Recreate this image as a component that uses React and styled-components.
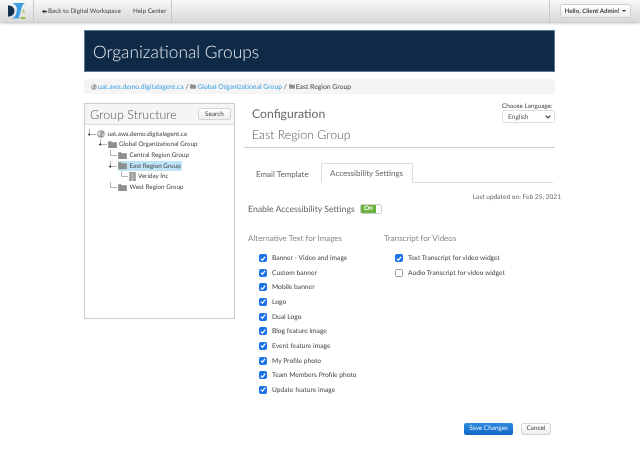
import React from "react";
import styled, { createGlobalStyle } from "styled-components";

const GlobalStyle = createGlobalStyle`
  html, body {
    margin: 0;
    padding: 0;
    background: #fff;
    font-family: Lato, "Open Sans", sans-serif;
    color: #333;
    text-rendering: geometricPrecision;
  }
`;

const imageItems = [
  "Banner - Video and image",
  "Custom banner",
  "Mobile banner",
  "Logo",
  "Dual Logo",
  "Blog feature image",
  "Event feature image",
  "My Profile photo",
  "Team Members Profile photo",
  "Update feature image",
];

const Folder = ({ size = 9 }) => (
  <svg width={size} height={size * 0.8} viewBox="0 0 11 9" style={{ flex: "none" }}>
    <path d="M0 1.2 Q0 .4 .8 .4 H3.6 L4.6 1.5 H10.2 Q11 1.5 11 2.2 V8.2 Q11 9 10.2 9 H.8 Q0 9 0 8.2Z" fill="#8f8f8f" />
  </svg>
);

const Globe = ({ size = 8, color = "#999" }) => (
  <svg width={size} height={size} viewBox="0 0 10 10" style={{ flex: "none" }}>
    <circle cx="5" cy="5" r="4.6" fill={color} />
    <path d="M2 2.2 L4.6 1.6 L5.4 3.2 L3.6 4.6 L4.4 6.4 L3.4 8 L1.4 5.6Z M6.4 5 L8.6 4.6 L8 7.4 L6.6 8Z" fill="#dedede" />
  </svg>
);

const Building = () => (
  <svg width="7" height="9" viewBox="0 0 8 11" style={{ flex: "none" }}>
    <rect width="8" height="11" fill="#969696" />
    <rect x="1.5" y="1.5" width="5" height="7" fill="#b0b0b0" />
    <rect x="3" y="9" width="2" height="2" fill="#e0e0e0" />
  </svg>
);

const Connector = ({ open }) => (
  <ConnectorSvg width="11" height="11" viewBox="0 0 11 11">
    <path d="M3.5 0 V5.5 H10" stroke="#b4b4b4" strokeWidth="1" fill="none" />
    {open && <path d="M1.5 5.5 L4 4 V7Z" fill="#444" />}
  </ConnectorSvg>
);

const Logo = () => (
  <svg width="20" height="18" viewBox="0 0 20 18">
    <path d="M1 3.5 H2.6 Q7.4 4.8 7.4 9 Q7.4 13.2 2.6 14.5 H1Z" fill="#14304f" />
    <path d="M5.5 1 H18 L15.5 3 L11.5 16.6 H3.5 Q8.4 16 9.4 11 L10 7.2 Q9.6 3 5.5 1Z" fill="#3d9fe0" />
    <path d="M16.5 7 L18.6 10.5 H14.8Z" fill="#a9cf7a" />
    <rect x="13.6" y="15" width="5" height="2" fill="#8dc63f" />
  </svg>
);

const Check = () => (
  <svg width="7" height="7" viewBox="0 0 7 7">
    <path d="M1 3.7 L2.8 5.6 L6 1.2" stroke="#fff" strokeWidth="1.5" fill="none" />
  </svg>
);

const BackArrow = styled.svg`
  flex: none;
  margin-right: 1px;
`;

const App = () => (
  <>
    <GlobalStyle />
    <TopBar>
      <LogoCell><Logo /></LogoCell>
      <BarLink $width="88px">
        <BackArrow width="5" height="5" viewBox="0 0 6 5">
          <path d="M0 2.5 L2.6 0 V1.6 H6 V3.4 H2.6 V5Z" fill="#333" />
        </BackArrow>
        Back to Digital Workspace
      </BarLink>
      <BarLink $width="50px" $last>Help Center</BarLink>
      <UserCell>
        <UserButton>
          Hello, Client Admin! <Caret />
        </UserButton>
      </UserCell>
    </TopBar>
    <Page>
      <Banner>Organizational Groups</Banner>
      <Breadcrumb>
        <Globe size={6} />
        <a>uat.aws.demo.digitalagent.ca</a>
        <Sep>/</Sep>
        <Folder size={6} />
        <a>Global Organizational Group</a>
        <Sep>/</Sep>
        <Folder size={6} />
        <span>East Region Group</span>
      </Breadcrumb>
      <Columns>
        <TreePanel>
          <TreeHeader>
            <TreeTitle>Group Structure</TreeTitle>
            <SearchButton>Search</SearchButton>
          </TreeHeader>
          <Tree>
            <TreeRow $depth={0}>
              <Connector open />
              <Globe />
              <TreeLabel>uat.aws.demo.digitalagent.ca</TreeLabel>
            </TreeRow>
            <TreeRow $depth={1}>
              <Connector open />
              <Folder />
              <TreeLabel>Global Organizational Group</TreeLabel>
            </TreeRow>
            <TreeRow $depth={2}>
              <Connector />
              <Folder />
              <TreeLabel>Central Region Group</TreeLabel>
            </TreeRow>
            <TreeRow $depth={2}>
              <Connector open />
              <Selected>
                <Folder />
                <TreeLabel>East Region Group</TreeLabel>
              </Selected>
            </TreeRow>
            <TreeRow $depth={3}>
              <Connector />
              <Building />
              <TreeLabel>Veriday Inc</TreeLabel>
            </TreeRow>
            <TreeRow $depth={2}>
              <Connector />
              <Folder />
              <TreeLabel>West Region Group</TreeLabel>
            </TreeRow>
          </Tree>
        </TreePanel>
        <Config>
          <ConfigHead>
            <ConfigHeading>
              <ConfigTitle>Configuration</ConfigTitle>
              <ConfigGroup>East Region Group</ConfigGroup>
            </ConfigHeading>
            <Language>
              <LanguageLabel>Choose Language:</LanguageLabel>
              <LanguageSelect>
                English
                <svg width="6" height="4" viewBox="0 0 6 4">
                  <path d="M.6 .6 L3 3 L5.4 .6" stroke="#444" strokeWidth="1.2" fill="none" />
                </svg>
              </LanguageSelect>
            </Language>
          </ConfigHead>
          <Tabs>
            <Tab>Email Template</Tab>
            <Tab $active>Accessibility Settings</Tab>
          </Tabs>
          <Updated>Last updated on: Feb 25, 2021</Updated>
          <EnableRow>
            <EnableLabel>Enable Accessibility Settings</EnableLabel>
            <Toggle>
              <ToggleOn>On</ToggleOn>
              <ToggleKnob />
            </Toggle>
          </EnableRow>
          <Options>
            <OptionColumn $width="136px">
              <OptionTitle>Alternative Text for Images</OptionTitle>
              <OptionList>
                {imageItems.map((label) => (
                  <Option key={label}>
                    <Box $checked><Check /></Box>
                    {label}
                  </Option>
                ))}
              </OptionList>
            </OptionColumn>
            <OptionColumn>
              <OptionTitle>Transcript for Videos</OptionTitle>
              <OptionList>
                <Option>
                  <Box $checked><Check /></Box>
                  Text Transcript for video widget
                </Option>
                <Option>
                  <Box />
                  Audio Transcript for video widget
                </Option>
              </OptionList>
            </OptionColumn>
          </Options>
          <Actions>
            <SaveButton>Save Changes</SaveButton>
            <CancelButton>Cancel</CancelButton>
          </Actions>
        </Config>
      </Columns>
    </Page>
  </>
);

const TopBar = styled.header`
  display: flex;
  align-items: stretch;
  height: 22px;
  background: linear-gradient(#f7f7f7, #d9d9d9);
  box-shadow: 0 1px 3px rgba(0, 0, 0, 0.3);
  will-change: transform;
`;

const LogoCell = styled.div`
  width: 34px;
  box-sizing: border-box;
  display: flex;
  align-items: center;
  padding-left: 7px;
  border-right: 1px solid #c8c8c8;
`;

const BarLink = styled.div`
  width: ${(p) => p.$width};
  box-sizing: border-box;
  display: flex;
  align-items: center;
  padding-left: ${(p) => (p.$last ? "11px" : "8px")};
  font-size: 6.3px;
  color: #444;
  white-space: nowrap;
  border-right: 1px solid ${(p) => (p.$last ? "#c8c8c8" : "transparent")};
`;

const UserCell = styled.div`
  margin-left: auto;
  width: 91px;
  box-sizing: border-box;
  padding: 4px 9px 0 10px;
  border-left: 1px solid #c8c8c8;
`;

const UserButton = styled.div`
  height: 12px;
  display: flex;
  align-items: center;
  justify-content: center;
  gap: 3px;
  background: linear-gradient(#fff, #ececec);
  border: 1px solid #d0d0d0;
  border-radius: 2px;
  font-size: 6.2px;
  font-weight: 700;
  color: #444;
  white-space: nowrap;
`;

const Caret = styled.span`
  width: 0;
  height: 0;
  border: 2px solid transparent;
  border-top-color: #333;
  border-bottom: 0;
`;

const Page = styled.main`
  width: 471px;
  margin: 8px 0 0 84px;
  will-change: transform;
`;

const Banner = styled.h1`
  margin: 0;
  height: 42px;
  box-sizing: border-box;
  padding-left: 8px;
  display: flex;
  align-items: center;
  background: #0e2a47;
  color: #e6ebf0;
  font-size: 17.3px;
  font-weight: 300;
  border: 1px solid #5c7893;
`;

const Breadcrumb = styled.nav`
  margin-top: 7px;
  height: 15px;
  display: flex;
  align-items: center;
  gap: 1px;
  padding-left: 7px;
  background: #f5f5f5;
  border-radius: 2px;
  font-size: 6.8px;
  color: #444;
  white-space: nowrap;
  a {
    color: #3a9fe2;
  }
`;

const Sep = styled.span`
  margin: 0 0.8px;
`;

const Columns = styled.div`
  display: flex;
  gap: 9px;
  margin-top: 9px;
`;

const TreePanel = styled.aside`
  width: 151px;
  height: 216px;
  box-sizing: border-box;
  border: 1px solid #ccc;
  flex: none;
`;

const TreeHeader = styled.div`
  height: 20px;
  display: flex;
  align-items: center;
  justify-content: space-between;
  padding: 0 3px 0 5px;
  background: #f5f5f5;
  border-bottom: 1px solid #ddd;
`;

const TreeTitle = styled.div`
  font-size: 12.5px;
  font-weight: 300;
  color: #555;
`;

const Tree = styled.div`
  padding-top: 4px;
`;

const TreeRow = styled.div`
  display: flex;
  align-items: center;
  height: 10.6px;
  padding-left: ${(p) => p.$depth * 10.5 + 1}px;
`;

const ConnectorSvg = styled.svg`
  flex: none;
`;

const TreeLabel = styled.span`
  margin-left: 2.5px;
  font-size: 6.3px;
  color: #444;
  white-space: nowrap;
`;

const Selected = styled.span`
  display: flex;
  align-items: center;
  height: 10px;
  padding-right: 1px;
  background: #bfe6f8;
`;

const Config = styled.section`
  flex: 1;
  min-width: 0;
`;

const ConfigHead = styled.div`
  display: flex;
  justify-content: space-between;
  height: 45px;
  box-sizing: border-box;
  padding-left: 8px;
  border-bottom: 1px solid #ccc;
`;

const ConfigHeading = styled.div`
  padding-top: 3px;
`;

const ConfigTitle = styled.h2`
  margin: 0;
  font-size: 12.2px;
  font-weight: 400;
  line-height: 16px;
  color: #666;
`;

const ConfigGroup = styled.h3`
  margin: 5px 0 0;
  font-size: 12.3px;
  font-weight: 300;
  line-height: 16px;
  color: #555;
`;

const Language = styled.div`
  width: 53px;
`;

const LanguageLabel = styled.div`
  font-size: 6.3px;
  line-height: 7px;
  color: #444;
`;

const LanguageSelect = styled.div`
  height: 13px;
  box-sizing: border-box;
  display: flex;
  align-items: center;
  justify-content: space-between;
  padding: 0 3px 0 5px;
  border: 1px solid #ddd;
  border-radius: 2px;
  font-size: 6.6px;
  color: #555;
`;

const Tabs = styled.div`
  display: flex;
  align-items: flex-end;
  width: 309px;
  height: 20px;
  margin-top: 14px;
  border-bottom: 1px solid #ddd;
`;

const Tab = styled.div`
  height: ${(p) => (p.$active ? "20px" : "19px")};
  display: flex;
  align-items: center;
  box-sizing: border-box;
  padding: 0 ${(p) => (p.$active ? "8.5px" : "11px")};
  margin-bottom: -1px;
  font-size: 8px;
  color: #666;
  background: #fff;
  border: 1px solid ${(p) => (p.$active ? "#ddd" : "transparent")};
  border-bottom-color: ${(p) => (p.$active ? "#fff" : "transparent")};
`;

const Updated = styled.div`
  margin: 10px -6px 0 0;
  text-align: right;
  font-size: 6.6px;
  line-height: 9px;
  color: #666;
`;

const EnableRow = styled.div`
  display: flex;
  align-items: center;
  gap: 5px;
  margin: 1.5px 0 0 4px;
  height: 10px;
`;

const EnableLabel = styled.span`
  font-size: 8.7px;
  color: #666;
`;

const Toggle = styled.div`
  display: flex;
  width: 22px;
  height: 10px;
  box-sizing: border-box;
  border: 1px solid #ccc;
  border-radius: 2px;
  overflow: hidden;
`;

const ToggleOn = styled.span`
  flex: 1;
  display: flex;
  align-items: center;
  justify-content: center;
  background: #6db33f;
  color: #fff;
  font-size: 6.3px;
  font-weight: 700;
`;

const ToggleKnob = styled.span`
  width: 5px;
  background: #fff;
`;

const Options = styled.div`
  display: flex;
  margin: 19.5px 0 0 4px;
`;

const OptionColumn = styled.div`
  width: ${(p) => p.$width || "auto"};
`;

const OptionTitle = styled.div`
  font-size: 8px;
  line-height: 10px;
  color: #888;
`;

const OptionList = styled.div`
  margin: 10px 0 0 11px;
  display: flex;
  flex-direction: column;
  gap: 4.67px;
`;

const Option = styled.label`
  display: flex;
  align-items: center;
  gap: 5px;
  height: 10px;
  font-size: 6.7px;
  color: #444;
  white-space: nowrap;
`;

const Box = styled.span`
  width: 8px;
  height: 8px;
  box-sizing: border-box;
  display: flex;
  align-items: center;
  justify-content: center;
  border-radius: 1.5px;
  background: ${(p) => (p.$checked ? "#1a73e8" : "#fff")};
  border: 1px solid ${(p) => (p.$checked ? "#1a73e8" : "#999")};
`;

const Actions = styled.div`
  display: flex;
  justify-content: flex-end;
  gap: 8px;
  margin: 28px 4px 0 0;
`;

const LightButton = styled.div`
  height: 12px;
  box-sizing: border-box;
  display: flex;
  align-items: center;
  justify-content: center;
  background: linear-gradient(#fff, #eee);
  border: 1px solid #d5d5d5;
  border-radius: 2px;
  font-size: 6.4px;
  color: #444;
`;

const SearchButton = styled(LightButton)`
  width: 33px;
`;

const CancelButton = styled(LightButton)`
  width: 30px;
`;

const SaveButton = styled.div`
  width: 49px;
  height: 12px;
  display: flex;
  align-items: center;
  justify-content: center;
  background: linear-gradient(#2b8be0, #1166c4);
  border-radius: 2px;
  font-size: 6.4px;
  color: #e8f2fb;
  white-space: nowrap;
`;

export default App;
